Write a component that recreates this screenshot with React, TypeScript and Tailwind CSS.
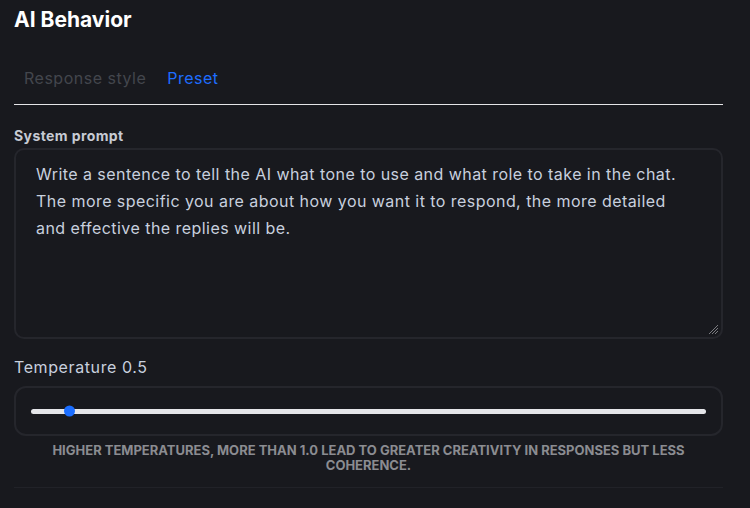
import React from "react";

export default function App() {
  return (
    <div
      className="w-[750px] h-[508px] bg-[#18191e] overflow-hidden"
      style={{ fontFamily: "Inter, 'Noto Sans', sans-serif" }}
    >
      <div className="pl-[14px] pr-[27px]">
        <h1 className="pt-[6px] text-[21px] leading-[28px] font-bold text-white">
          AI Behavior
        </h1>
        <div className="flex items-center gap-[21px] pl-[10px] pt-[33px] pb-[15px] border-b border-[#e4e4e7] text-[16px] leading-[22px] tracking-[0.5px]">
          <span className="text-[#43464d]">Response style</span>
          <span className="text-[#1e6dff]">Preset</span>
        </div>
        <div className="pt-[22px] text-[14px] leading-[18px] font-bold text-[#c7cbd4] tracking-[0.4px]">
          System prompt
        </div>
        <div className="relative mt-[3px] h-[191px] rounded-[10px] border-2 border-[#25262c] px-[20px] pt-[11px] text-[16px] leading-[27px] text-[#c8d0de] tracking-[0.45px]">
          <p>
            Write a sentence to tell the AI what tone to use and what role to take in the chat.
            <br />
            The more specific you are about how you want it to respond, the more detailed
            <br />
            and effective the replies will be.
          </p>
          <svg className="absolute right-[2px] bottom-[2px]" width="12" height="12" viewBox="0 0 12 12">
            <line x1="2" y1="11" x2="11" y2="2" stroke="#7a7b80" strokeWidth="1" />
            <line x1="5" y1="11" x2="11" y2="5" stroke="#7a7b80" strokeWidth="1" />
            <line x1="8" y1="11" x2="11" y2="8" stroke="#7a7b80" strokeWidth="1" />
          </svg>
        </div>
        <div className="pt-[17px] text-[16px] leading-[22px] text-[#c8d0de] tracking-[0.6px]">Temperature 0.5</div>
        <div className="mt-[8px] h-[50px] rounded-[12px] border-2 border-[#25262c] flex items-center px-[15px]">
          <div className="relative w-full h-[5px] rounded-full bg-[#e4e5e9]">
            <div className="absolute left-[33px] top-1/2 -translate-y-1/2 w-[11px] h-[11px] rounded-full bg-[#1a6dff]" />
          </div>
        </div>
        <p className="mt-[7px] px-[20px] text-center text-[13px] leading-[15px] font-bold uppercase text-[#8b8c91]">
          Higher temperatures, more than 1.0 lead to greater creativity in responses but less
          <br />
          coherence.
        </p>
        <div className="mt-[14px] border-b border-[#212228]" />
      </div>
    </div>
  );
}
